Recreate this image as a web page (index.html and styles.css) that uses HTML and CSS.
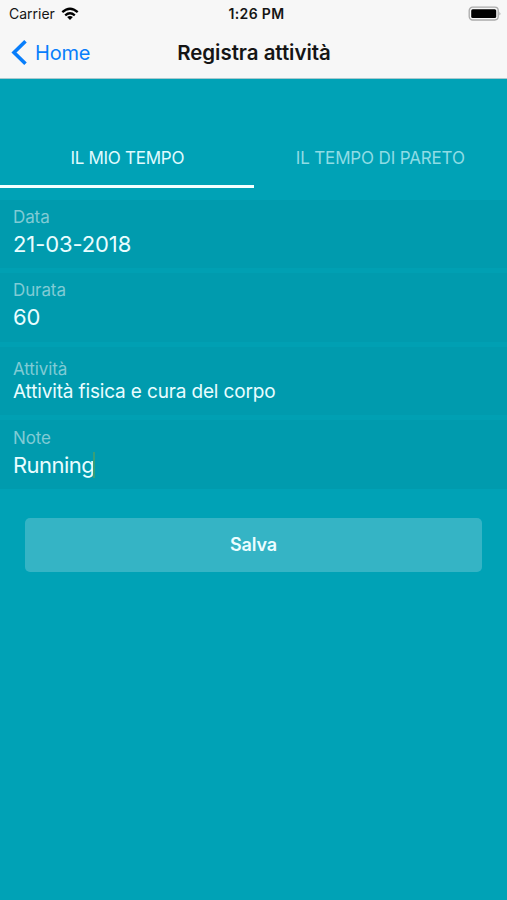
FILE: index.html
```html
<!DOCTYPE html>
<html lang="it">
<head>
<meta charset="utf-8">
<title>Registra attività</title>
<link rel="stylesheet" href="styles.css">
</head>
<body>
<header class="header">
  <div class="status">
    <div class="status-left"><span class="carrier">Carrier</span>
      <svg class="wifi" width="18" height="14" viewBox="0 0 18 14"><g fill="none" stroke="#000" stroke-width="2.3"><path d="M1.3 5.2Q9-1.8 16.7 5.2"/><path d="M4.2 8.4Q9 4.2 13.8 8.4"/></g><path d="M6.1 10.1Q9 7.9 11.9 10.1L9 13Z"/></svg>
    </div>
    <span class="time">1:26 PM</span>
    <svg class="battery" width="34" height="16" viewBox="0 0 34 16"><rect x="1.2" y="1.2" width="29" height="12.8" rx="3.4" fill="#f7f7f7" stroke="#aaa" stroke-width="1.3"/><rect x="3.2" y="3.2" width="25" height="8.8" rx="1.5"/><path d="M31.5 5.6q1.6 2 0 4z" fill="#999"/></svg>
  </div>
  <nav class="nav">
    <a class="back"><svg width="17" height="27" viewBox="0 0 17 27"><path d="M14.5 2.3L3 13.5L14.5 24.7" fill="none" stroke="#087efb" stroke-width="3.6"/></svg><span>Home</span></a>
    <h1 class="title">Registra attività</h1>
    <span></span>
  </nav>
</header>
<main>
  <div class="tabs">
    <div class="tab active"><span class="tab-one">IL MIO TEMPO</span></div>
    <div class="tab"><span class="tab-two">IL TEMPO DI PARETO</span></div>
  </div>
  <form class="form">
    <div class="fields">
      <div class="field"><span class="label">Data</span><span class="value date">21-03-2018</span></div>
      <div class="field"><span class="label">Durata</span><span class="value">60</span></div>
      <div class="field select"><span class="label">Attività</span><span class="value">Attività fisica e cura del corpo</span></div>
      <div class="field"><span class="label">Note</span><span class="value note">Running<i class="caret"></i></span></div>
    </div>
    <button class="save" type="button">Salva</button>
  </form>
</main>
</body>
</html>
```
FILE: styles.css
```css
* { box-sizing: border-box; }
body { margin: 0; height: 900px; overflow: hidden; background: #00a2b6; font-family: Inter, "Liberation Sans", sans-serif; color: #e9fdff; }
.header { height: 79px; background: #f7f7f7; border-bottom: 1px solid #a9c9ce; color: #151515; }
.status { height: 27px; display: grid; grid-template-columns: 1fr auto 1fr; align-items: center; padding: 0 5px 0 9px; }
.status-left { display: flex; align-items: center; gap: 6px; }
.carrier { font-size: 14px; letter-spacing: 0; line-height: 20px; }
.time { font-size: 14px; font-weight: 600; letter-spacing: 0.35px; line-height: 20px; position: relative; left: 1px; }
.battery { justify-self: end; }
.nav { height: 51px; display: grid; grid-template-columns: 1fr auto 1fr; align-items: center; padding: 0 0 0 11px; }
.back { display: flex; align-items: center; gap: 7px; color: #087efb; font-size: 20px; letter-spacing: -0.2px; }
.title { margin: 0; font-size: 20.5px; font-weight: 600; letter-spacing: -0.04px; line-height: 28px; position: relative; left: -5px; }
.tabs { display: flex; height: 109px; padding-top: 49px; }
.tab { width: 254px; height: 60px; padding-top: 18px; text-align: center; font-size: 17px; line-height: 24px; color: #8fdce5; letter-spacing: -0.15px; }
.active { color: #e0fbff; border-bottom: 3px solid #f4ffff; letter-spacing: -0.28px; }
.tab-one { margin-left: 1px; }
.form { display: flex; flex-direction: column; padding-top: 12px; }
.fields { display: flex; flex-direction: column; gap: 5px; background: #00a0b3; }
.field { height: 68.4px; padding: 6px 13px 0; display: flex; flex-direction: column; align-items: flex-start; background: #009bae; }
.label { font-size: 17px; letter-spacing: -0.1px; line-height: 22px; color: #80cbd5; }
.value { font-size: 22px; line-height: 32px; display: flex; align-items: center; white-space: nowrap; letter-spacing: -0.1px; }
.select { padding-top: 11px; }
.select .value { font-size: 19px; line-height: 24px; letter-spacing: -0.15px; }
.field:last-child { padding-top: 6.7px; }
.note { letter-spacing: -0.55px; }
.caret { width: 2px; height: 26px; margin-left: -1px; background: #389f78; }
.save { margin: 29.4px 25px 0; height: 54px; border: 0; border-radius: 5px; background: #35b4c5; color: #ecfdff; font: 600 18px/28px Inter, "Liberation Sans", sans-serif; letter-spacing: -0.1px; padding: 1px 0 0; }
```
